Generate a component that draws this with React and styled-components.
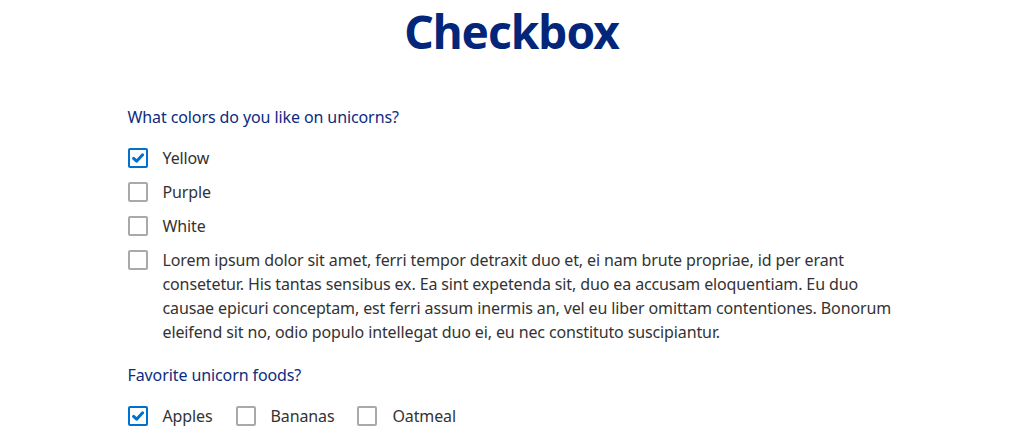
import React from "react";
import styled, { createGlobalStyle } from "styled-components";

const Global = createGlobalStyle`
  html, body { margin: 0; padding: 0; background: #fff; }
  body { font-family: "Noto Sans", "Lato", sans-serif; color: #333; }
`;

const Page = styled.main`
  max-width: 768px;
  margin: 0 auto;
  display: flex;
  flex-direction: column;
`;

const Title = styled.h1`
  margin: 0;
  padding-top: 3px;
  height: 105px;
  box-sizing: border-box;
  text-align: center;
  font-size: 46px;
  line-height: 56px;
  font-weight: 700;
  color: #03267a;
  letter-spacing: -1px;
`;

const Group = styled.fieldset`
  border: 0;
  margin: 0 0 19px;
  padding: 0;
  min-width: 0;
`;

const Legend = styled.legend`
  padding: 0;
  margin: 0 0 17px;
  font-size: 16px;
  line-height: 24px;
  color: #0b2c80;
  letter-spacing: -0.1px;
`;

const List = styled.div`
  display: flex;
  flex-direction: ${(p) => (p.$inline ? "row" : "column")};
  gap: 10px ${(p) => (p.$inline ? "27px" : "0")};
`;

const Row = styled.label`
  display: flex;
  align-items: flex-start;
  gap: 15px;
  font-size: 16px;
  line-height: 24px;
  color: #333;
  letter-spacing: -0.12px;
`;

const Box = styled.span`
  flex: none;
  width: 20px;
  height: 20px;
  margin-top: 2px;
  box-sizing: border-box;
  border: 2px solid ${(p) => (p.$checked ? "#0071ce" : "#a9a9a9")};
  border-radius: 2px;
  display: flex;
  align-items: center;
  justify-content: center;
  background: #fff;
`;

const Text = styled.span`
  flex: 1;
  margin-right: -4px;
`;

const Tick = () => (
  <svg width="12" height="10" viewBox="0 0 12 10" aria-hidden="true">
    <path
      d="M1.6 5.4 L4.6 8.2 L10.6 1.8"
      fill="none"
      stroke="#0071ce"
      strokeWidth="3"
      strokeLinecap="round"
      strokeLinejoin="round"
    />
  </svg>
);

function Check({ checked, children }) {
  return (
    <Row>
      <Box $checked={checked}>{checked && <Tick />}</Box>
      <Text>{children}</Text>
    </Row>
  );
}

export default function App() {
  return (
    <>
      <Global />
      <Page>
        <Title>Checkbox</Title>
        <Group>
          <Legend>What colors do you like on unicorns?</Legend>
          <List>
            <Check checked>Yellow</Check>
            <Check>Purple</Check>
            <Check>White</Check>
            <Check>
              Lorem ipsum dolor sit amet, ferri tempor detraxit duo et, ei nam brute propriae, id per erant consetetur. His tantas sensibus ex. Ea sint expetenda sit, duo ea accusam eloquentiam. Eu duo causae epicuri conceptam, est ferri assum inermis an, vel eu liber omittam contentiones. Bonorum eleifend sit no, odio populo intellegat duo ei, eu nec constituto suscipiantur.
            </Check>
          </List>
        </Group>
        <Group>
          <Legend>Favorite unicorn foods?</Legend>
          <List $inline>
            <Check checked>Apples</Check>
            <Check>Bananas</Check>
            <Check>Oatmeal</Check>
          </List>
        </Group>
      </Page>
    </>
  );
}
